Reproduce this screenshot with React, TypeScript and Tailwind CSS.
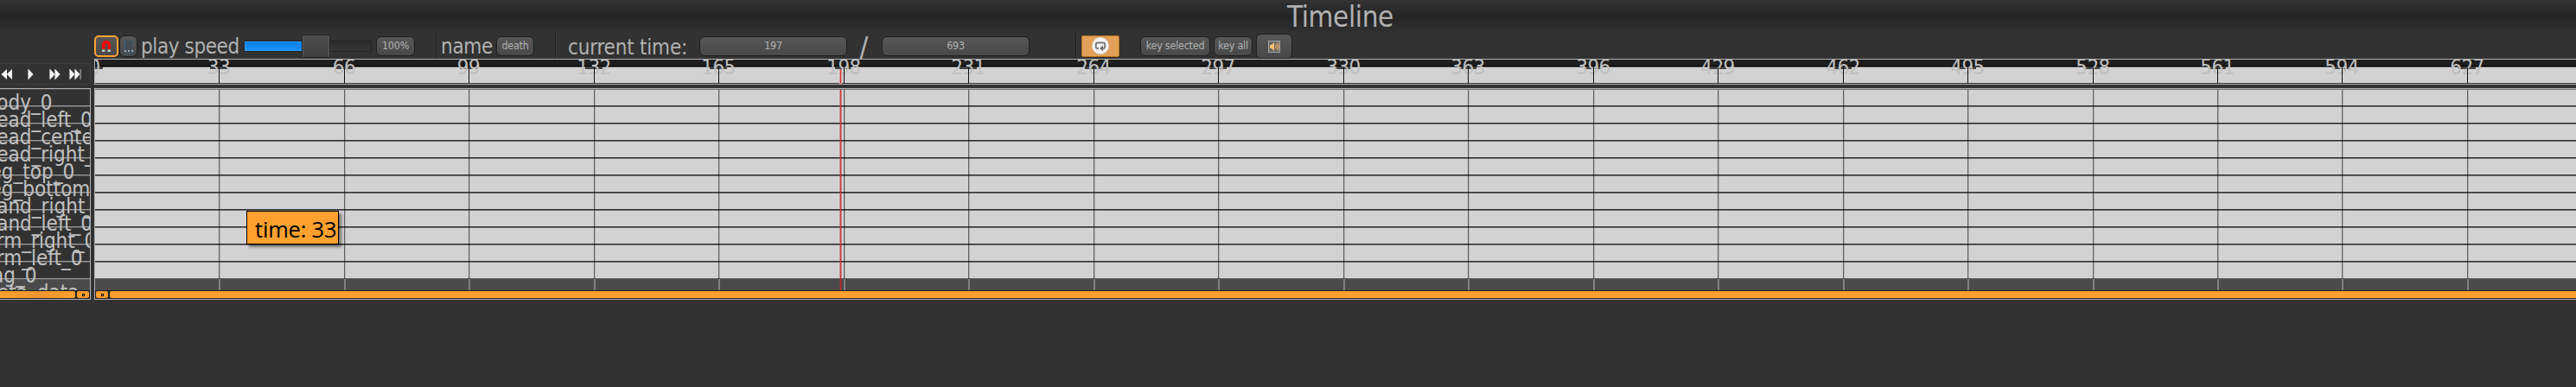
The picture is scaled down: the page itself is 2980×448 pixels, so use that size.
import React from "react";

const tracks = [
  "body_0",
  "head_left_0",
  "head_center_0",
  "head_right_0",
  "leg_top_0",
  "leg_bottom_0",
  "hand_right_0",
  "hand_left_0",
  "arm_right_0",
  "arm_left_0",
  "tag_0",
];

const ticks = Array.from({ length: 20 }, (_, i) => ({
  label: i * 33,
  x: Math.round(i * 144.47) - 1,
}));

const button =
  "flex shrink-0 items-center justify-center rounded-[6px] border border-[#1f1f1f] bg-linear-to-b from-[#575757] to-[#484848] pt-px text-[12.5px] tracking-[-0.25px] text-[#b1b1b1]";

function Separator({ className }: { className: string }) {
  return <i className={"h-full w-[2px] shrink-0 border-l border-[#1f1f1f] bg-[#3b3b3b] " + className} />;
}

function Magnet() {
  return (
    <svg className="shrink-0" width="10" height="13" viewBox="0 0 10 13">
      <path d="M0 10V5Q0 0 5 0t5 5v5H6.500V5.500Q6.500 3.500 5 3.500T3.500 5.500V10z" fill="#fa0505" />
      <path d="M0 10.500h3.500V13H0zM6.500 10.500H10V13H6.500z" fill="#bfc6c6" />
    </svg>
  );
}

function Frame() {
  return (
    <svg className="shrink-0" width="12" height="18" viewBox="0 0 12 18">
      <rect x="1.500" y="1.500" width="9" height="15" rx="1" fill="#454b50" stroke="#3b5f7c" />
      <path d="M1 13h2v2H1zM5 13h2v2H5zM9 13h2v2H9z" fill="#a3a9ad" />
    </svg>
  );
}

function Loop() {
  return (
    <svg className="shrink-0" width="20" height="20" viewBox="0 0 20 20">
      <circle cx="10" cy="10" r="9.700" fill="#f4f4f4" stroke="#d6cfc6" strokeWidth=".6" />
      <path d="M8 13H6.500Q4.800 13 4.800 11V8.500Q4.800 6.500 6.800 6.500h6.400q2 0 2 2V11q0 2-2 2H12" fill="none" stroke="#7d7d7d" strokeWidth="2" />
      <path d="M13 9.500v7L9 13z" fill="#6d6d6d" />
    </svg>
  );
}

function Speaker() {
  return (
    <svg className="shrink-0" width="14" height="14" viewBox="0 0 14 14">
      <rect x=".5" y=".5" width="13" height="13" fill="#686868" stroke="#a5a5a5" />
      <path d="M2 5h2l3-3v10L4 9H2z" fill="#ffc070" />
      <path d="M8.300 4.800q1.400 2.200 0 4.400M9.700 3.300q2.300 3.700 0 7.400M11.200 2.200q2.600 4.800 0 9.600" fill="none" stroke="#f4b45f" strokeWidth=".9" />
    </svg>
  );
}

function Transport() {
  return (
    <svg className="shrink-0" width="104" height="22" viewBox="0 0 104 22" fill="#f6f6f6">
      <path d="M8 5v12L1.500 11zM14 5v12L7.800 11z" />
      <path d="M33 5v12l5.500-6z" />
      <path d="M58 5v12l5.500-6zM64 5v12l5.500-6z" />
      <path d="M81 5v12l5.500-6zM87 5v12l5.500-6z" />
      <path d="M32 5h1v12h-1zM57 5h1v12h-1zM63 5h1v12h-1zM80 5h1v12h-1zM86 5h1v12h-1zM92.500 5h1.200v12h-1.200z" fill="#a0a0a0" />
    </svg>
  );
}

function ScrollKnob({ className }: { className: string }) {
  return (
    <span className={"flex h-[8px] w-[14px] shrink-0 items-center justify-center rounded-[2px] bg-[#fb9c2e] " + className}>
      <i className="size-[3px] bg-black">
        <i className="m-[1px] block size-px bg-white" />
      </i>
    </span>
  );
}

export default function App() {
  return (
    <div className="flex h-[448px] w-[2980px] flex-col overflow-hidden bg-[#323232] font-['DejaVu_Sans_Condensed','DejaVu_Sans',sans-serif] whitespace-nowrap text-[#b1b1b1]">
      <header className="flex h-[38px] shrink-0 justify-center bg-linear-to-b from-[#323232] via-[#242424] to-[#313131] pt-px pl-[121px]">
        <h1 className="text-[33px] leading-[38px] tracking-[-0.4px]">Timeline</h1>
      </header>

      <div className="flex h-[309px] shrink-0">
        <aside className="flex w-[105px] shrink-0 flex-col pt-[35px]">
          <div className="flex h-[25px] shrink-0 items-center rounded-r-[4px] border border-l-0 border-[#3e3e3e]">
            <Transport />
          </div>
          <div className="mt-[4px] flex h-[245px] flex-col border border-l-0 border-[#b1b1b1]">
            <div className="flex h-[233px] flex-col overflow-hidden border-t border-[#4a4a4a] text-[24px] leading-[30px] text-[#c0c0c0]">
              {tracks.map((name) => (
                <div key={name} className="h-[20px] shrink-0 border-b border-[#5c5c5c]">
                  <div className="h-[19px] border-b border-[#989898]">
                    <span className="relative ml-[-17.5px] block">{name}</span>
                  </div>
                </div>
              ))}
              <div className="h-[13px] shrink-0 bg-[#4a4a4a]">
                <span className="relative ml-[-24px] block">meta_data</span>
              </div>
            </div>
            <div className="flex h-[10px] border-y border-[#222222] bg-[#222222]">
              <i className="h-[8px] w-[87px] shrink-0 rounded-r-[2px] bg-linear-to-r from-[#ffa02f] via-[#ee952e] to-[#ffa02f]" />
              <ScrollKnob className="ml-[2px]" />
            </div>
          </div>
        </aside>

        <main className="ml-[4px] flex w-[2871px] shrink-0 flex-col">
          <div className="flex h-[30px] shrink-0 items-center">
            <button className="flex h-[25px] w-[28px] shrink-0 items-center justify-center rounded-[5px] border-2 border-[#ffa02f] bg-linear-to-b from-[#575757] to-[#484848]">
              <Magnet />
            </button>
            <button className={button + " ml-px h-[25px] w-[21px]"}>
              <Frame />
            </button>
            <span className="ml-[4px] w-[119px] pt-[2px] text-[24px] leading-[30px] tracking-[-0.4px]">play speed</span>
            <div className="flex h-[13px] w-[148px] shrink-0 items-center rounded-[2px] border border-[#222222] bg-linear-to-b from-[#2c2c2c] to-[#363636]">
              <i className="h-[11px] w-[67px] shrink-0 border border-[#2ba0ff] bg-linear-to-b from-[#067fe6] to-[#1c92fb]" />
              <i className="h-[25px] w-[31px] shrink-0 border-x border-[#5c5c5c] bg-linear-to-b from-[#4c4c4c] to-[#404040] outline outline-[#262626]" />
            </div>
            <button className={button + " ml-[5px] h-[23px] w-[45px]"}>100%</button>
            <Separator className="ml-[24px]" />
            <span className="ml-[4px] w-[64px] pt-[2px] text-[24px] leading-[30px] tracking-[-0.3px]">name</span>
            <button className={button + " h-[23px] w-[44px]"}>death</button>
            <Separator className="ml-[24px]" />
            <span className="ml-[13px] w-[152px] pt-[3px] text-[24px] leading-[30px] tracking-[-0.2px]">current time:</span>
            <button className={button + " h-[23px] w-[171px]"}>197</button>
            <span className="ml-[14px] w-[26px] pt-[3px] text-[34px] leading-[30px]">/</span>
            <button className={button + " h-[23px] w-[171px]"}>693</button>
            <Separator className="ml-[53px]" />
            <button className="ml-[5px] flex h-[25px] w-[44px] shrink-0 items-center justify-center rounded-[2px] border border-[#b9701c] bg-[#e0a058]">
              <Loop />
            </button>
            <button className={button + " ml-[24px] h-[23px] w-[81px]"}>key selected</button>
            <button className={button + " ml-[4px] h-[23px] w-[45px]"}>key all</button>
            <button className={button + " ml-[4px] h-[29px] w-[42px]"}>
              <Speaker />
            </button>
          </div>

          <div className="relative h-[30px] shrink-0 overflow-hidden border border-r-0 border-[#b1b1b1] bg-[#d2d2d2]">
            <div className="h-[9px] border-b border-[#5c5a5c] bg-[#1e1e1e]">
              <div className="h-[8px] border-b border-black" />
            </div>
            <div className="h-[19px] border-b border-[#323232]" />
            {ticks.map(({ label, x }) => (
              <div key={label} className="absolute top-0 flex h-[28px] w-[60px] justify-center" style={{ left: x - 30 }}>
                <i className="absolute top-[8px] left-[20px] h-[3px] w-[20px] bg-[#404040]" />
                <span className="relative -mt-[3px] text-[24px] leading-[24px] tracking-[-0.5px] text-[#c0c0c0]">{label}</span>
                <i className="absolute top-[9px] left-[30px] h-[19px] w-px bg-[#101010]" />
              </div>
            ))}
            <i className="absolute top-[11px] left-[861px] h-[17px] w-[3px] border-x border-[#d99a9a] bg-[#d43a3a]" />
          </div>

          <div className="relative mt-[4px] h-[245px] shrink-0 border border-r-0 border-[#b1b1b1]">
            <div className="relative h-[233px] overflow-hidden border-t border-[#707070] bg-[#d2d2d2]">
              {tracks.slice(1).map((name) => (
                <div key={name} className="h-[20px] border-b border-[#6c6c6c]">
                  <div className="h-[19px] border-b border-[#303030]" />
                </div>
              ))}
              <div className="h-[19px] border-b border-[#666666]" />
              <div className="h-[13px] bg-[#4a4a4a]" />
              {ticks.slice(1).map(({ label, x }) => (
                <div key={label} className="absolute top-0 flex h-[232px] w-[2px] flex-col" style={{ left: x }}>
                  <i className="h-[219px] border-l border-black/45 bg-black/15" />
                  <i className="h-[13px] bg-[#808080]" />
                </div>
              ))}
              <i className="absolute top-0 left-[861px] h-[232px] w-[3px] bg-[#c03030]/40" />
              <i className="absolute top-0 left-[862px] h-[232px] w-px bg-[#c82828]/85" />
            </div>
            <div className="flex h-[10px] border-y border-[#222222] bg-[#222222]">
              <ScrollKnob className="ml-px" />
              <i className="ml-[2px] h-[8px] grow rounded-l-[2px] bg-[#ff9f2f]" />
            </div>
            <div className="absolute top-[141px] left-[175px] h-[39px] w-[107px] border border-black bg-[#ffa02f] pl-[9px] font-['Open_Sans','Noto_Sans',sans-serif] text-[25.5px] leading-[41px] tracking-[-0.2px] text-black shadow-[3px_3px_3px_rgba(0,0,0,0.45)]">
              time: 33
            </div>
          </div>
        </main>
      </div>
    </div>
  );
}
